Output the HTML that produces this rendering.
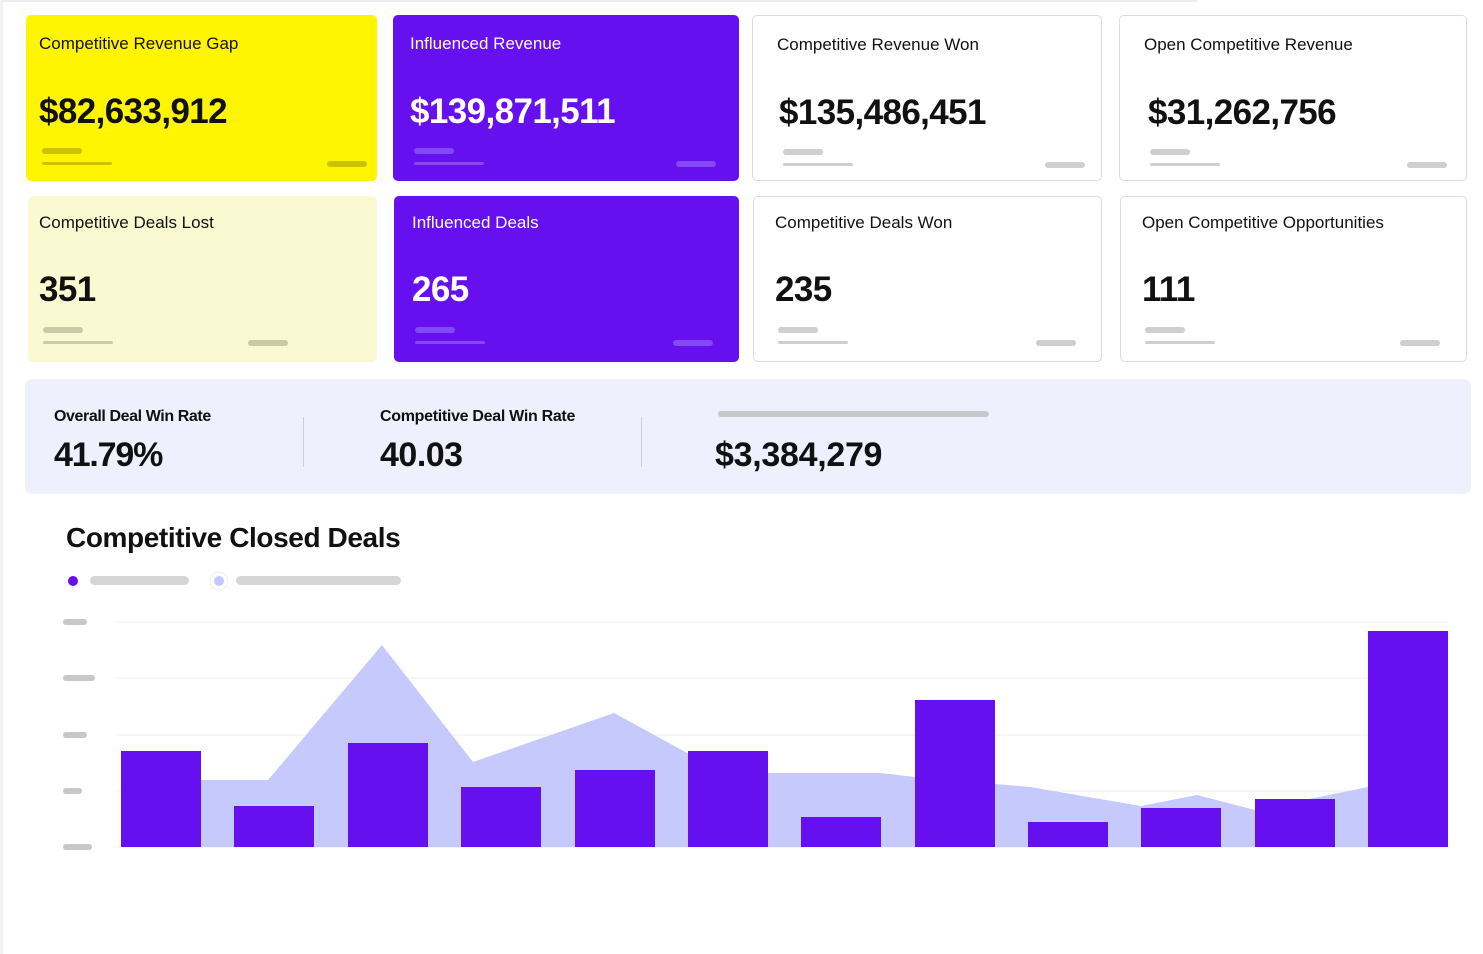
<!DOCTYPE html>
<html><head><meta charset="utf-8"><style>
*{margin:0;padding:0;box-sizing:border-box}
body{width:1483px;height:954px;background:#fff;position:relative;overflow:hidden;font-family:"Liberation Sans",sans-serif;color:#111}
.c{position:absolute;border-radius:5px}
.w{border:1.5px solid #dcdcdc;background:#fff}
.y{background:#fff500}
.ly{background:#fbf9d2}
.p{background:#660fef;color:#fff}
.t{position:absolute;left:13px;top:19px;font-size:17px;letter-spacing:0px}
.n{position:absolute;left:13px;top:77px;font-size:35px;font-weight:bold;letter-spacing:-0.6px}
.b{position:absolute;border-radius:3px}
.w .b{background:#cfcfcf}.y .b{background:#cdc200}.ly .b{background:#cac9a8}.p .b{background:#8448f5}
.b1{left:16px;top:133px;width:40px;height:6px}
.b2{left:16px;top:147px;width:70px;height:3px}
.b3{right:10px;top:146px;width:40px;height:6px}
</style></head><body>
<div style="position:absolute;left:0;top:0;width:1197px;height:2px;background:#eee"></div>
<div style="position:absolute;left:0;top:0;width:3px;height:954px;background:#f2f2f2"></div>

<div class="c y" style="left:26px;top:15px;width:351px;height:166px"><div class="t">Competitive Revenue Gap</div><div class="n">$82,633,912</div><div class="b b1"></div><div class="b b2"></div><div class="b b3"></div></div>
<div class="c p" style="left:393px;top:15px;width:346px;height:166px"><div class="t" style="left:17px">Influenced Revenue</div><div class="n" style="left:17px">$139,871,511</div><div class="b b1" style="left:21px"></div><div class="b b2" style="left:21px"></div><div class="b b3" style="right:23px"></div></div>
<div class="c w" style="left:752px;top:15px;width:350px;height:166px"><div class="t" style="left:24px">Competitive Revenue Won</div><div class="n" style="left:26px">$135,486,451</div><div class="b b1" style="left:30px"></div><div class="b b2" style="left:30px"></div><div class="b b3" style="right:16px"></div></div>
<div class="c w" style="left:1119px;top:15px;width:348px;height:166px"><div class="t" style="left:24px">Open Competitive Revenue</div><div class="n" style="left:28px">$31,262,756</div><div class="b b1" style="left:30px"></div><div class="b b2" style="left:30px"></div><div class="b b3" style="right:19px"></div></div>

<div class="c ly" style="left:28px;top:196px;width:349px;height:166px"><div class="t" style="left:11px;top:17px">Competitive Deals Lost</div><div class="n" style="left:11px;top:74px">351</div><div class="b b1" style="left:15px;top:131px"></div><div class="b b2" style="left:15px;top:145px"></div><div class="b b3" style="right:89px;top:144px"></div></div>
<div class="c p" style="left:394px;top:196px;width:345px;height:166px"><div class="t" style="left:18px;top:17px">Influenced Deals</div><div class="n" style="left:18px;top:74px">265</div><div class="b b1" style="left:21px;top:131px"></div><div class="b b2" style="left:21px;top:145px"></div><div class="b b3" style="right:26px;top:144px"></div></div>
<div class="c w" style="left:753px;top:196px;width:349px;height:166px"><div class="t" style="left:21px;top:16px">Competitive Deals Won</div><div class="n" style="left:21px;top:73px">235</div><div class="b b1" style="left:24px;top:130px"></div><div class="b b2" style="left:24px;top:144px"></div><div class="b b3" style="right:25px;top:143px"></div></div>
<div class="c w" style="left:1120px;top:196px;width:347px;height:166px"><div class="t" style="left:21px;top:16px">Open Competitive Opportunities</div><div class="n" style="left:21px;top:73px">111</div><div class="b b1" style="left:24px;top:130px"></div><div class="b b2" style="left:24px;top:144px"></div><div class="b b3" style="right:26px;top:143px"></div></div>

<div class="c" style="left:25px;top:379px;width:1446px;height:115px;background:#eff0fd;border-radius:7px">
 <div style="position:absolute;left:29px;top:29px;font-size:16px;font-weight:bold;letter-spacing:-0.4px">Overall Deal Win Rate</div>
 <div style="position:absolute;left:29px;top:57px;font-size:34px;font-weight:bold;letter-spacing:-1.2px">41.79%</div>
 <div style="position:absolute;left:278px;top:38px;width:1px;height:50px;background:#cfcfd8"></div>
 <div style="position:absolute;left:355px;top:29px;font-size:16px;font-weight:bold;letter-spacing:-0.3px">Competitive Deal Win Rate</div>
 <div style="position:absolute;left:355px;top:57px;font-size:34px;font-weight:bold;letter-spacing:-0.5px">40.03</div>
 <div style="position:absolute;left:616px;top:38px;width:1px;height:50px;background:#cfcfd8"></div>
 <div style="position:absolute;left:693px;top:32px;width:271px;height:6px;border-radius:3px;background:#c8c8cc"></div>
 <div style="position:absolute;left:690px;top:57px;font-size:34px;font-weight:bold;letter-spacing:-0.3px">$3,384,279</div>
</div>

<div style="position:absolute;left:66px;top:522px;font-size:28px;font-weight:bold;letter-spacing:-0.4px">Competitive Closed Deals</div>

<svg style="position:absolute;left:0;top:0" width="1483" height="954">
 <circle cx="73" cy="581" r="5" fill="#660fef"/>
 <rect x="90" y="576" width="99" height="9" rx="4.5" fill="#d6d6d6"/>
 <circle cx="219" cy="581" r="9" fill="#fff" stroke="#eee"/>
 <circle cx="219" cy="581" r="5" fill="#c4c8fc"/>
 <rect x="236" y="576" width="165" height="9" rx="4.5" fill="#d6d6d6"/>
 <g stroke="#ececec" stroke-width="1">
  <line x1="116" y1="622" x2="1448" y2="622"/><line x1="116" y1="678" x2="1448" y2="678"/>
  <line x1="116" y1="735" x2="1448" y2="735"/><line x1="116" y1="791" x2="1448" y2="791"/>
  <line x1="116" y1="847" x2="1448" y2="847"/>
 </g>
 <g fill="#c8c8c8">
  <rect x="63" y="619" width="24" height="6" rx="3"/><rect x="63" y="675" width="32" height="6" rx="3"/>
  <rect x="63" y="732" width="24" height="6" rx="3"/><rect x="63" y="788" width="19" height="6" rx="3"/>
  <rect x="63" y="844" width="29" height="6" rx="3"/>
 </g>
 <polygon fill="#c6c9fb" points="121,780 268,780 382,645 473,762 614,713 700,760 768,773 880,773 915,777 1030,787 1141,806 1197,795 1255,810 1368,787 1448,760 1448,847 121,847"/>
 <g fill="#660fef">
  <rect x="121" y="751" width="80" height="96"/><rect x="234" y="806" width="80" height="41"/>
  <rect x="348" y="743" width="80" height="104"/><rect x="461" y="787" width="80" height="60"/>
  <rect x="575" y="770" width="80" height="77"/><rect x="688" y="751" width="80" height="96"/>
  <rect x="801" y="817" width="80" height="30"/><rect x="915" y="700" width="80" height="147"/>
  <rect x="1028" y="822" width="80" height="25"/><rect x="1141" y="808" width="80" height="39"/>
  <rect x="1255" y="799" width="80" height="48"/><rect x="1368" y="631" width="80" height="216"/>
 </g>
</svg>
</body></html>
